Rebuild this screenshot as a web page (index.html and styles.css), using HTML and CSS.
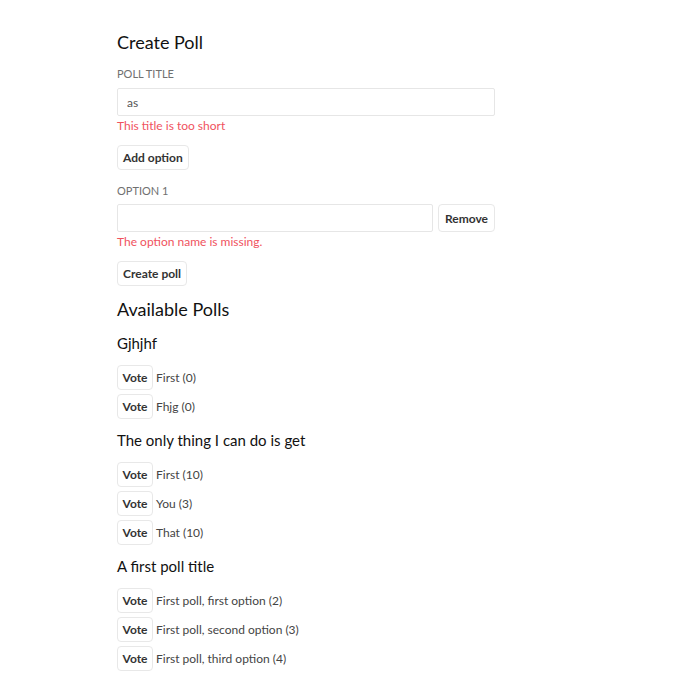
FILE: index.html
```html
<!DOCTYPE html>
<html>
<head>
<meta charset="utf-8">
<link rel="stylesheet" href="styles.css">
</head>
<body>
<main class="page">
  <section class="create">
    <h2 class="h-main">Create Poll</h2>
    <label class="label">POLL TITLE</label>
    <input class="input input-full" type="text" value="as">
    <div class="error">This title is too short</div>
    <button class="btn btn-add">Add option</button>
    <label class="label label-opt">OPTION 1</label>
    <div class="option-row">
      <input class="input input-opt" type="text" value="">
      <button class="btn">Remove</button>
    </div>
    <div class="error">The option name is missing.</div>
    <button class="btn btn-create">Create poll</button>
  </section>
  <section class="polls">
    <h2 class="h-main h-polls">Available Polls</h2>
    <div class="poll">
      <h3 class="h-poll">Gjhjhf</h3>
      <div class="vote-row"><button class="btn btn-vote">Vote</button><span class="opt">First (0)</span></div>
      <div class="vote-row"><button class="btn btn-vote">Vote</button><span class="opt">Fhjg (0)</span></div>
    </div>
    <div class="poll">
      <h3 class="h-poll">The only thing I can do is get</h3>
      <div class="vote-row"><button class="btn btn-vote">Vote</button><span class="opt">First (10)</span></div>
      <div class="vote-row"><button class="btn btn-vote">Vote</button><span class="opt">You (3)</span></div>
      <div class="vote-row"><button class="btn btn-vote">Vote</button><span class="opt">That (10)</span></div>
    </div>
    <div class="poll">
      <h3 class="h-poll">A first poll title</h3>
      <div class="vote-row"><button class="btn btn-vote">Vote</button><span class="opt">First poll, first option (2)</span></div>
      <div class="vote-row"><button class="btn btn-vote">Vote</button><span class="opt">First poll, second option (3)</span></div>
      <div class="vote-row"><button class="btn btn-vote">Vote</button><span class="opt">First poll, third option (4)</span></div>
    </div>
  </section>
</main>
</body>
</html>
```
FILE: styles.css
```css
* { box-sizing: border-box; }
body {
  margin: 0;
  background: #fff;
  font-family: Lato, "Open Sans", sans-serif;
  color: #222;
}
.page {
  width: 378px;
  margin-left: 117px;
  padding-top: 29px;
  display: flex;
  flex-direction: column;
}
.create, .polls { display: flex; flex-direction: column; align-items: flex-start; }
.h-main {
  margin: 0;
  font-size: 18px;
  font-weight: 400;
  line-height: 26px;
  color: #111;
}
.h-polls { margin-bottom: 4px; }
.label {
  display: block;
  margin-top: 12px;
  font-size: 11px;
  line-height: 14px;
  color: #707070;
}
.label-opt { margin-top: 14px; }
.input {
  height: 28px;
  border: 1px solid #e6e6e6;
  border-radius: 2px;
  padding: 0 9px;
  font: inherit;
  font-size: 12px;
  color: #555;
  outline: none;
}
.input-full { width: 378px; margin-top: 7px; }
.option-row { display: flex; gap: 5px; width: 378px; margin-top: 6px; }
.input-opt { flex: 1; }
.error {
  font-size: 12px;
  line-height: 16px;
  color: #f0525e;
  margin-top: 2px;
}
.btn {
  height: 25px;
  border: 1px solid #e8e8e8;
  border-radius: 4px;
  background: #fff;
  padding: 0 5px;
  font: inherit;
  font-size: 12px;
  font-weight: 700;
  color: #333;
}
.option-row .btn { height: 28px; padding: 0 6px; }
.btn-add { margin-top: 11px; }
.btn-create { margin-top: 11px; margin-bottom: 10px; }
.h-poll {
  margin: 7px 0 12px;
  font-size: 15px;
  font-weight: 400;
  line-height: 20px;
  color: #111;
}
.vote-row {
  display: flex;
  align-items: center;
  gap: 3px;
  margin-bottom: 4px;
}
.btn-vote { width: 36px; padding: 0; }
.opt { font-size: 12px; color: #444; }
```
